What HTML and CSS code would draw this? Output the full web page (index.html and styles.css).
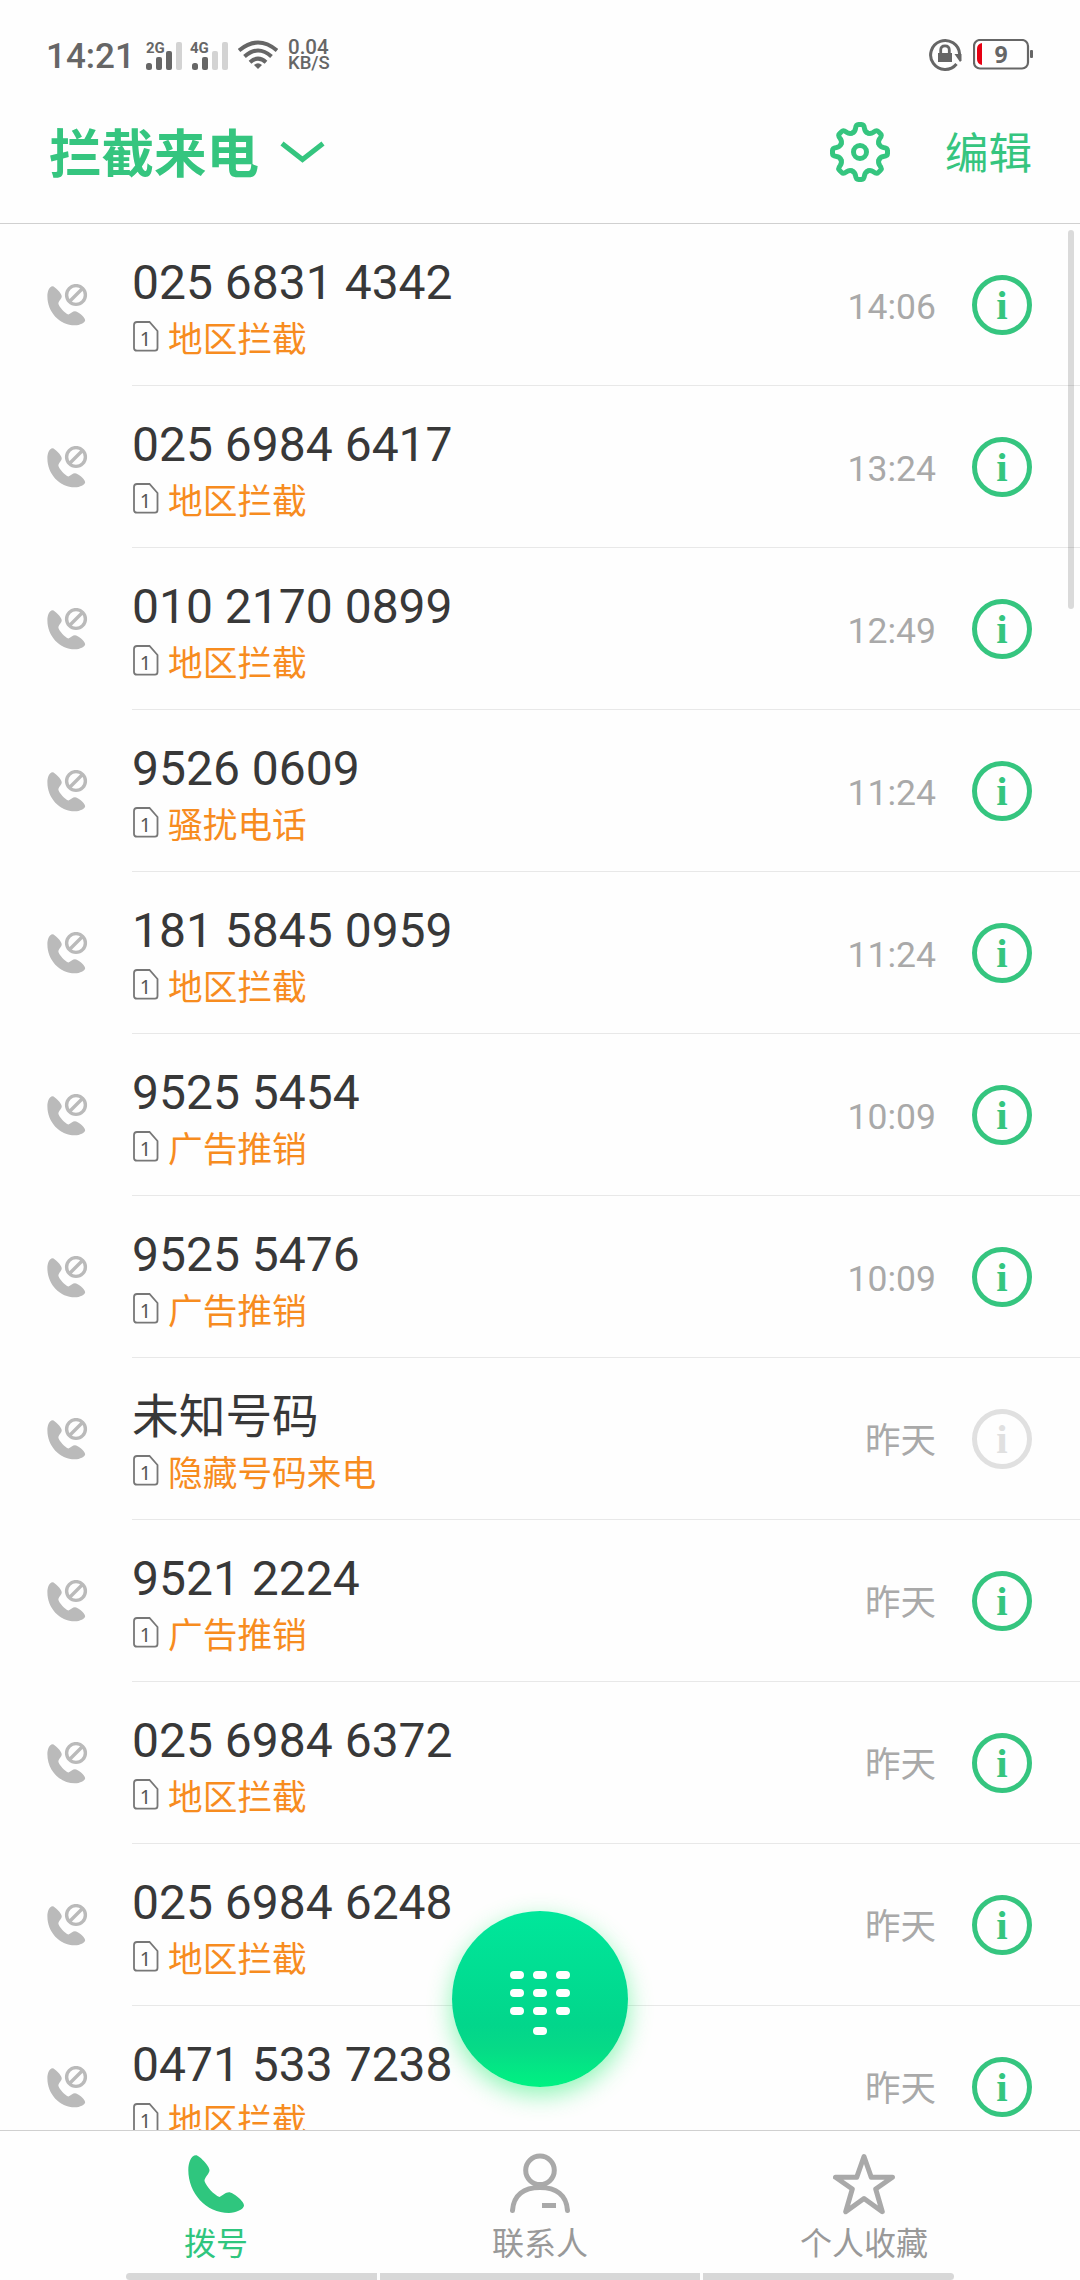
FILE: index.html
```html
<!doctype html>
<html lang="zh-CN">
  <head>
    <meta charset="utf-8">
    <title>拦截来电</title>
    <link rel="stylesheet" href="styles.css">
  </head>
  <body>
    <svg class="symbols" width="0" height="0">
      <symbol id="phone" viewBox="0 0 57 59">
        <path fill="currentColor" d="M8 .3C11 .3 21.5 11 21.5 15S16.5 22 16.5 26C18 31 26 40 31.5 42C35 40.5 37.5 37.3 41 37.3C45 37.3 56 46 56 50.5C56 54 48 58 41 58C18 58 .3 38 .3 15C.3 8 3 .3 8 .3Z"/>
      </symbol>
      <symbol id="blocked" viewBox="0 0 42 44">
        <use href="#phone" x="0" y="2" width="39" height="40"/>
        <g fill="none" stroke="currentColor" stroke-width="3.4">
          <circle cx="29" cy="11" r="9.4"/>
          <path d="M22.5 17.5L35.5 4.5"/>
        </g>
      </symbol>
      <symbol id="tooth" viewBox="-30 -30 60 60">
        <path fill="none" stroke="currentColor" stroke-width="5" stroke-linecap="round" d="M-7.85 -18.95C-5.6 -19.9 -4.9 -21 -4.5 -23.5Q-4 -27.5 -1.5 -27.5H1.5Q4 -27.5 4.5 -23.5C4.9 -21 5.6 -19.9 7.85 -18.95"/>
      </symbol>
    </svg>

    <div class="status-bar">
      <span class="clock">14:21</span>
      <svg class="signals" width="84" height="34" viewBox="0 0 84 34">
        <text x="0" y="14.5">2G</text>
        <g fill="#666">
          <rect x="0" y="25" width="6" height="7" rx="2.5"/>
          <rect x="10" y="19" width="6" height="13" rx="2"/>
          <rect x="20" y="13" width="6" height="19" rx="2"/>
        </g>
        <rect x="30" y="4" width="6" height="28" rx="2" fill="#d3d3d3"/>
        <text x="44" y="15">4G</text>
        <g fill="#666">
          <rect x="46" y="25" width="6" height="7" rx="2.5"/>
          <rect x="56" y="19" width="6" height="13" rx="2"/>
        </g>
        <g fill="#d3d3d3">
          <rect x="66" y="13" width="6" height="19" rx="2"/>
          <rect x="76" y="4" width="6" height="28" rx="2"/>
        </g>
      </svg>
      <svg class="wifi" width="40" height="30" viewBox="0 0 40 30">
        <g fill="none" stroke="#666" stroke-width="4">
          <path d="M1 10.5Q20 -5.5 39 10.5"/>
          <path d="M6.5 16.5Q20 4.5 33.5 16.5"/>
          <path d="M12 22.2Q20 15 28 22.2"/>
        </g>
        <path fill="#666" d="M16 25Q20 21.5 24 25L20 29Z"/>
      </svg>
      <div class="speed"><span>0.04</span><span>KB/S</span></div>
      <svg class="rotate-lock" width="34" height="34" viewBox="0 0 34 34">
        <path fill="none" stroke="#666" stroke-width="3" d="M30.6 16A14.5 14.5 0 1 0 27.5 26"/>
        <path fill="#666" d="M25.5 16H32.5V22.5L31 24Z"/>
        <rect x="9" y="15" width="14" height="9" fill="#666"/>
        <path fill="none" stroke="#666" stroke-width="2.8" d="M11.7 16V12Q11.7 7.8 16 7.8T20.3 12V16"/>
      </svg>
      <svg class="battery" width="62" height="32" viewBox="0 0 62 32">
        <rect x="1" y="1" width="54" height="28.5" rx="6" fill="none" stroke="#666" stroke-width="2.2"/>
        <path fill="#e60012" d="M9 4V26Q4 25 4 20V10Q4 5 9 4Z"/>
        <rect x="57" y="11" width="3" height="8" rx="1" fill="#666"/>
        <text x="28" y="24">9</text>
      </svg>
    </div>

    <header class="header">
      <h1>拦截来电</h1>
      <svg class="chevron" width="45" height="22" viewBox="0 0 45 22">
        <path d="M2 2.5L22.5 18.5L43 2.5"/>
      </svg>
      <svg class="gear" width="60" height="60" viewBox="-30 -30 60 60">
        <g id="teeth"></g>
        <circle r="6.5" fill="none" stroke="currentColor" stroke-width="5"/>
      </svg>
      <a class="edit">编辑</a>
    </header>

    <main class="list-area">
      <ul class="calls" id="calls"></ul>
      <div class="scrollbar"></div>
    </main>

    <button class="dial-button" type="button">
      <svg width="60" height="64" viewBox="0 0 60 64">
        <g stroke="#fff" stroke-width="8" stroke-linecap="round">
          <path d="M4 4H10M27 4H33M50 4H56"/>
          <path d="M4 22H10M27 22H33M50 22H56"/>
          <path d="M4 40H10M27 40H33M50 40H56"/>
          <path d="M27 60H33"/>
        </g>
      </svg>
    </button>

    <nav class="tabs">
      <a class="tab active">
        <svg width="62" height="62" viewBox="0 0 62 62"><use href="#phone" x="3" y="2" width="57" height="59"/></svg>
        <span>拨号</span>
      </a>
      <a class="tab">
        <svg width="62" height="62" viewBox="0 0 62 62">
          <g fill="none" stroke="currentColor" stroke-width="5">
            <circle cx="31" cy="17.3" r="14.3"/>
            <path stroke-linecap="round" d="M3.5 57.5C4.5 42 15 34.5 31 34.5S57.5 42 58.5 57.5"/>
            <path d="M33 52.5H47"/>
          </g>
        </svg>
        <span>联系人</span>
      </a>
      <a class="tab">
        <svg width="62" height="62" viewBox="0 0 62 62">
          <path fill="none" stroke="currentColor" stroke-width="5" stroke-linejoin="round" d="M31 3.5L38.3 24.3H59.5L42.7 36L49.3 58.7L31 45.5L12.7 58.7L19.3 36L2.5 24.3H23.7Z"/>
        </svg>
        <span>个人收藏</span>
      </a>
    </nav>
    <div class="nav-hints"><i></i><i></i><i></i></div>

    <script>
      const calls = [
        ['025 6831 4342', '地区拦截', '14:06'],
        ['025 6984 6417', '地区拦截', '13:24'],
        ['010 2170 0899', '地区拦截', '12:49'],
        ['9526 0609', '骚扰电话', '11:24'],
        ['181 5845 0959', '地区拦截', '11:24'],
        ['9525 5454', '广告推销', '10:09'],
        ['9525 5476', '广告推销', '10:09'],
        ['未知号码', '隐藏号码来电', '昨天', true],
        ['9521 2224', '广告推销', '昨天'],
        ['025 6984 6372', '地区拦截', '昨天'],
        ['025 6984 6248', '地区拦截', '昨天'],
        ['0471 533 7238', '地区拦截', '昨天']
      ];

      document.getElementById('calls').innerHTML = calls.map(([number, reason, time, unknown]) => `
        <li class="call${unknown ? ' unknown' : ''}">
          <svg class="blocked-icon" width="42" height="44"><use href="#blocked"/></svg>
          <div class="call-body">
            <div class="call-text">
              <div class="number">${number}</div>
              <div class="reason">
                <svg width="26" height="31" viewBox="0 0 26 31">
                  <path class="sim-outline" d="M4 1H16.5L24.5 10V27Q24.5 29.7 22 29.7H4Q1 29.7 1 27V4Q1 1 4 1Z"/>
                  <text x="12.5" y="24.5" class="sim-number">1</text>
                </svg>
                <span>${reason}</span>
              </div>
            </div>
            <span class="time">${time}</span>
            <span class="info">i</span>
          </div>
        </li>`).join('');

      // eight teeth around the settings gear
      let teeth = '';
      for (let a = 0; a < 360; a += 45) {
        teeth += `<use href="#tooth" x="-30" y="-30" width="60" height="60" transform="rotate(${a})"/>`;
      }
      document.getElementById('teeth').innerHTML = teeth;
    </script>
  </body>
</html>
```
FILE: styles.css
```css
* {
  box-sizing: border-box;
}

body {
  margin: 0;
  width: 1080px;
  height: 2280px;
  display: flex;
  flex-direction: column;
  position: relative;
  overflow: hidden;
  background: #fefefe;
  color: #383838;
  font-family: Roboto, "Noto Sans CJK SC", sans-serif;
}

.symbols {
  position: absolute;
}

svg {
  display: block;
  flex: none;
}

.status-bar {
  height: 110px;
  flex: none;
  display: flex;
  align-items: center;
  padding: 0 45px 0 46px;
  color: #666;
}

.clock {
  width: 100px;
  font-size: 35px;
  font-weight: 500;
  line-height: 42px;
  padding-top: 3px;
}

.signals text {
  font-size: 15px;
  font-weight: 700;
  fill: #666;
}

.wifi {
  margin-left: 8px;
}

.speed {
  margin-left: 10px;
  display: flex;
  flex-direction: column;
  font-size: 20.5px;
  font-weight: 500;
  line-height: 16px;
}

.speed span + span {
  font-size: 18.5px;
}

.rotate-lock {
  margin-left: auto;
}

.battery {
  margin-left: 10px;
}

.battery text {
  font-family: "Noto Sans", sans-serif;
  font-size: 23px;
  font-weight: 700;
  text-anchor: middle;
  fill: #666;
}

.header {
  height: 114px;
  flex: none;
  display: flex;
  align-items: center;
  padding: 0 48px 29px 49px;
  border-bottom: 1px solid #d0d0d0;
  color: #35c57f;
}

h1 {
  margin: 0;
  padding-top: 5px;
  font-size: 52.5px;
  font-weight: 700;
  line-height: 60px;
}

.chevron {
  margin-left: 21px;
}

.chevron path {
  fill: none;
  stroke: currentColor;
  stroke-width: 5;
}

.gear {
  margin-left: auto;
}

.edit {
  margin-left: 55px;
  padding-top: 5px;
  font-size: 43.5px;
  line-height: 60px;
}

.list-area {
  height: 1906px;
  flex: none;
  position: relative;
  overflow: hidden;
}

.calls {
  list-style: none;
  margin: 0;
  padding: 0;
}

.call {
  height: 162px;
  display: flex;
  padding-left: 47px;
}

.blocked-icon {
  margin-top: 60px;
  color: #bababa;
}

.call-body {
  flex: 1;
  display: flex;
  align-items: center;
  margin-left: 43px;
  padding-right: 48px;
  border-bottom: 1px solid #e8e8e8;
}

.call-text {
  flex: 1;
  padding-top: 13px;
}

.number {
  height: 58px;
  font-size: 48px;
  line-height: 58px;
}

.unknown .number {
  font-size: 46.7px;
}

.reason {
  height: 56px;
  display: flex;
  align-items: center;
  color: #f78c1f;
  font-size: 34.7px;
  line-height: 56px;
}

.reason svg {
  margin: 0 9px 7px 1px;
}

.sim-outline {
  fill: none;
  stroke: #777;
  stroke-width: 1.8;
}

.sim-number {
  font-family: "Noto Sans", sans-serif;
  font-size: 20px;
  text-anchor: middle;
  fill: #555;
}

.time {
  padding-top: 4px;
  color: #a9a9a9;
  font-size: 35.5px;
  line-height: 44px;
}

.info {
  width: 60px;
  height: 60px;
  margin-left: 36px;
  border: 5px solid #35c57f;
  border-radius: 50%;
  color: #35c57f;
  font-family: "Liberation Serif", serif;
  font-size: 41px;
  font-weight: 700;
  line-height: 50px;
  text-align: center;
}

.unknown .info {
  border-color: #e0e0e0;
  color: #e0e0e0;
}

.scrollbar {
  position: absolute;
  top: 6px;
  right: 6px;
  width: 6px;
  height: 379px;
  border-radius: 3px;
  background: rgba(0, 0, 0, 0.14);
}

.dial-button {
  position: absolute;
  left: 452px;
  top: 1911px;
  width: 176px;
  height: 176px;
  padding: 8px 0 0;
  display: flex;
  align-items: center;
  justify-content: center;
  border: none;
  border-radius: 50%;
  background: linear-gradient(#00e79b, #02d68b 65%, #06da87 78%, #00f282);
  box-shadow: 0 8px 24px rgba(0, 235, 90, 0.45);
}

.tabs {
  height: 143px;
  flex: none;
  display: flex;
  padding: 22px 54px 0;
  border-top: 1px solid #d0d0d0;
  color: #a9a9a9;
}

.tab {
  flex: 1;
  display: flex;
  flex-direction: column;
  align-items: center;
  font-size: 32px;
  line-height: 59px;
}

.tab span {
  color: #999;
}

.tab.active,
.tab.active span {
  color: #2fc67e;
}

.nav-hints {
  height: 7px;
  flex: none;
  display: flex;
  gap: 3px;
  padding: 0 126px;
}

.nav-hints i {
  width: 251px;
  background: #d8d8d8;
}

.nav-hints i:nth-child(2) {
  flex: 1;
}

.nav-hints i:first-child {
  border-radius: 4px 0 0 4px;
}

.nav-hints i:last-child {
  border-radius: 0 4px 4px 0;
}
```
